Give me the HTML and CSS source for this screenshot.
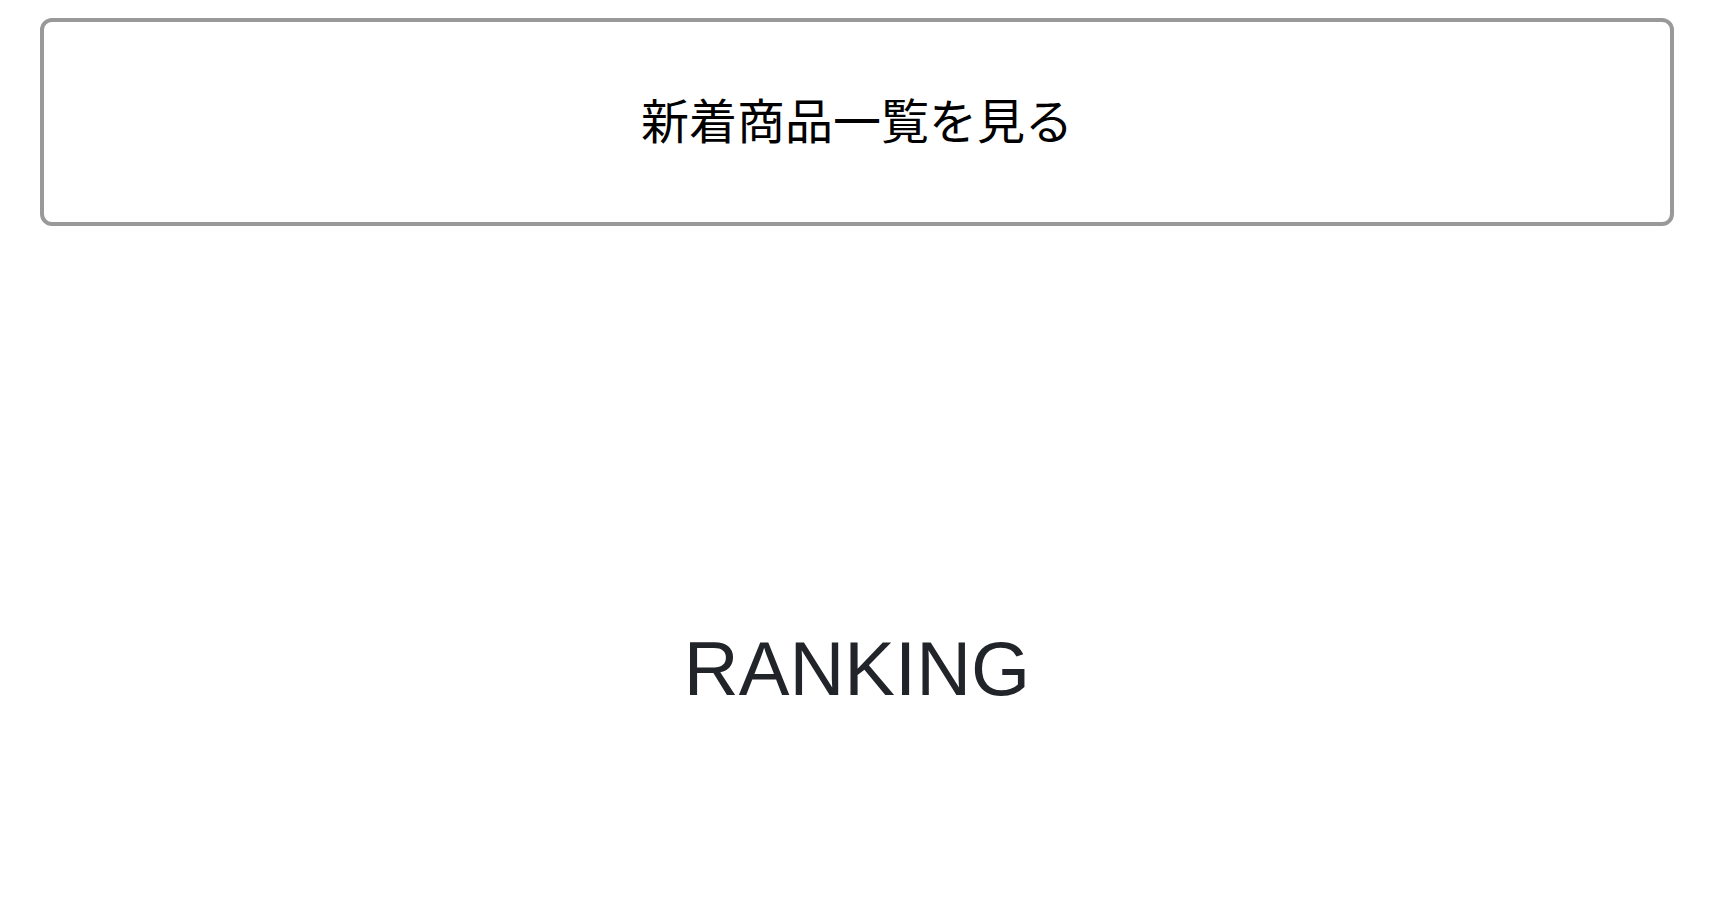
FILE: index.html
```html
<!DOCTYPE html>
<html lang="ja">
<head>
    <meta charset="UTF-8">
    <meta name="viewport" content="width=device-width, initial-scale=1.0">
    <title>RANKING</title>
    <link rel="stylesheet" href="styles.css">
</head>
<body>
    <section class="new-items">
        <a href="#" class="more-btn">新着商品一覧を見る</a>
    </section>

    <section class="ranking">
        <h2 class="section-title">RANKING</h2>
    </section>
</body>
</html>
```

FILE: styles.css
```css
body {
    margin: 0;
    background: #fff;
    color: #212529;
    font-family: "Noto Sans CJK JP", sans-serif;
}
.new-items {
    padding: 18px 42px 0 40px;
}
.more-btn {
    display: block;
    padding: 64px 0 72px;
    border: 4px solid #999;
    border-radius: 12px;
    color: #000;
    font-size: 48px;
    line-height: 64px;
    text-align: center;
    text-decoration: none;
}
.ranking {
    padding: 387px 42px 160px 40px;
}
.section-title {
    margin: 0;
    font-family: "Liberation Sans", "Noto Sans CJK JP", sans-serif;
    font-size: 76px;
    font-weight: 400;
    line-height: 112px;
    text-align: center;
}
```
